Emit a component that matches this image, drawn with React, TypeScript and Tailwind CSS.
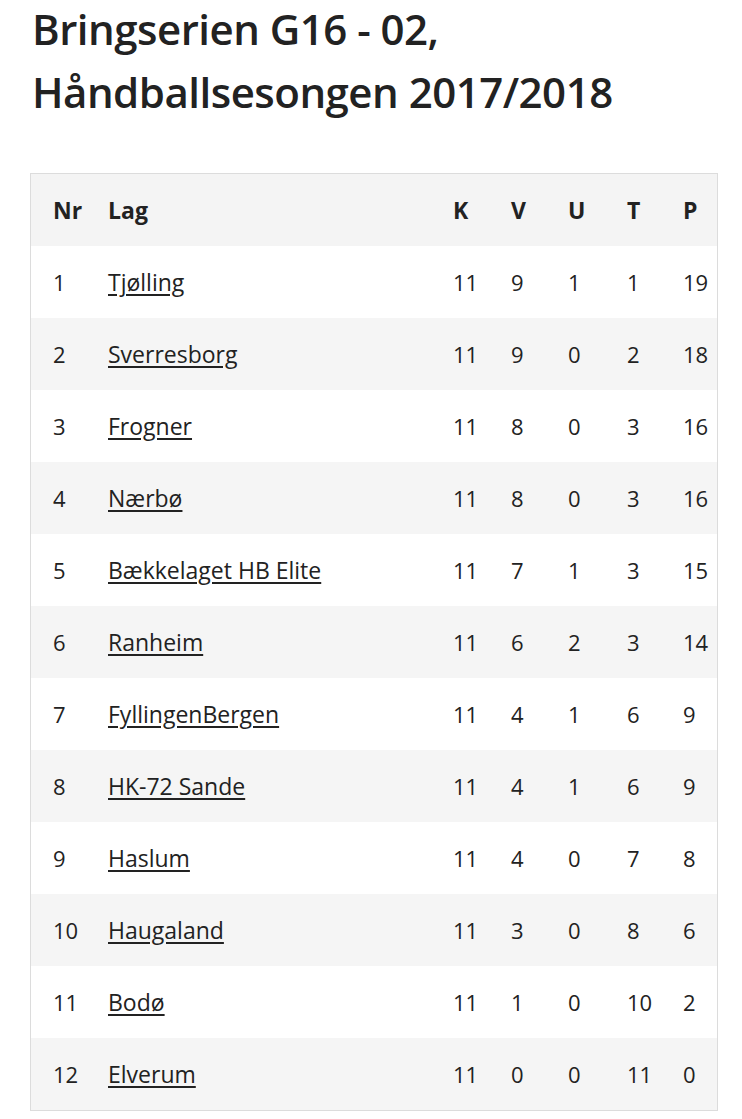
import React from 'react';

const teams = [
  { nr: 1, lag: 'Tjølling', k: 11, v: 9, u: 1, t: 1, p: 19 },
  { nr: 2, lag: 'Sverresborg', k: 11, v: 9, u: 0, t: 2, p: 18 },
  { nr: 3, lag: 'Frogner', k: 11, v: 8, u: 0, t: 3, p: 16 },
  { nr: 4, lag: 'Nærbø', k: 11, v: 8, u: 0, t: 3, p: 16 },
  { nr: 5, lag: 'Bækkelaget HB Elite', k: 11, v: 7, u: 1, t: 3, p: 15 },
  { nr: 6, lag: 'Ranheim', k: 11, v: 6, u: 2, t: 3, p: 14 },
  { nr: 7, lag: 'FyllingenBergen', k: 11, v: 4, u: 1, t: 6, p: 9 },
  { nr: 8, lag: 'HK-72 Sande', k: 11, v: 4, u: 1, t: 6, p: 9 },
  { nr: 9, lag: 'Haslum', k: 11, v: 4, u: 0, t: 7, p: 8 },
  { nr: 10, lag: 'Haugaland', k: 11, v: 3, u: 0, t: 8, p: 6 },
  { nr: 11, lag: 'Bodø', k: 11, v: 1, u: 0, t: 10, p: 2 },
  { nr: 12, lag: 'Elverum', k: 11, v: 0, u: 0, t: 11, p: 0 },
];

const cols = 'grid grid-cols-[55px_345px_58px_57px_59px_56px_1fr] items-center pl-[22px]';

export default function App() {
  return (
    <div className="min-h-screen bg-white text-[#222] font-['Open_Sans',sans-serif]">
      <div className="px-[30px]">
        <h1 className="-mt-[3px] text-[42px] leading-[63px] font-semibold tracking-[-0.5px] pl-[2px]">
          Bringserien G16 - 02,
          <br />
          Håndballsesongen 2017/2018
        </h1>

        <div className="mt-[50px] w-[688px] border border-[#dcdcdc]">
          <div className={`${cols} h-[72px] bg-[#f4f4f4] text-[23px] font-bold`}>
            <div>Nr</div>
            <div>Lag</div>
            <div>K</div>
            <div>V</div>
            <div>U</div>
            <div>T</div>
            <div>P</div>
          </div>
          {teams.map((team, i) => (
            <div
              key={team.nr}
              className={`${cols} h-[72px] text-[22px] ${i % 2 === 1 ? 'bg-[#f5f5f5]' : 'bg-white'}`}
            >
              <div>{team.nr}</div>
              <div>
                <a href="#" className="text-[23px] underline underline-offset-[3px] decoration-[1.5px]">
                  {team.lag}
                </a>
              </div>
              <div>{team.k}</div>
              <div>{team.v}</div>
              <div>{team.u}</div>
              <div>{team.t}</div>
              <div>{team.p}</div>
            </div>
          ))}
        </div>
      </div>
    </div>
  );
}
